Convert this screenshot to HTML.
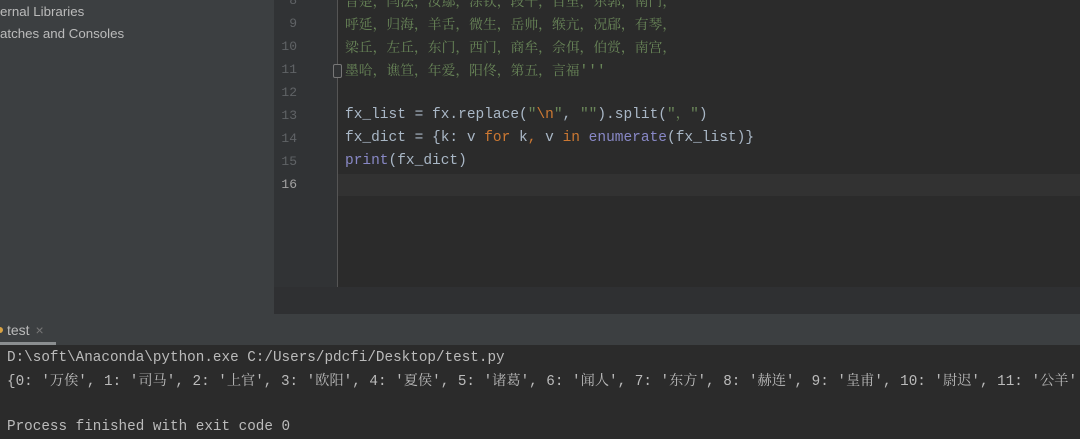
<!DOCTYPE html>
<html><head><meta charset="utf-8"><style>
body{margin:0;width:1080px;height:438px;overflow:hidden;background:#2b2b2b;position:relative;font-family:"Liberation Mono","Noto Serif CJK SC",monospace}
div{position:absolute}
.left{left:0;top:0;width:274px;height:314px;background:#3c3f41}
.lt{left:0;font-family:"Liberation Sans",sans-serif;font-size:13.3px;color:#bbbbbb;white-space:nowrap}
.gut{left:274px;top:0;width:63px;height:287px;background:#313335}
.gl{left:337px;top:0;width:1px;height:287px;background:#555555}
.strip{left:274px;top:287px;width:806px;height:27px;background:#2f3032}
.hdr{left:0;top:314px;width:1080px;height:31px;background:#3c3f41}
.cur{left:338px;top:174px;width:742px;height:22px;background:#323232}
.ln{left:274px;width:23px;text-align:right;color:#606366;font-size:13px;line-height:23px}
.code{left:345px;font-size:14.5px;color:#a9b7c6;white-space:pre;line-height:23px}
.cn{color:#6a8759;font-family:"Noto Serif CJK SC",serif;font-size:13.8px}
.q{font-family:"Liberation Mono",monospace;font-size:14.5px}
.s{color:#6a8759}.k{color:#cc7832}.b{color:#8888c6}
.con{left:7px;font-size:14.3px;color:#bbbbbb;white-space:pre;line-height:23px}
.con span.c{font-family:"Noto Serif CJK SC",serif;font-size:14.2px}
</style></head><body>
<div class="left"></div>
<div class="lt" style="top:4px">ernal Libraries</div>
<div class="lt" style="top:26px">atches and Consoles</div>
<div class="gut"></div>
<div class="gl"></div>
<div class="cur"></div>
<div class="strip"></div>
<div class="ln" style="top:-11px">8</div>
<div class="ln" style="top:12px">9</div>
<div class="ln" style="top:35px">10</div>
<div class="ln" style="top:58px">11</div>
<div class="ln" style="top:81px">12</div>
<div class="ln" style="top:104px">13</div>
<div class="ln" style="top:127px">14</div>
<div class="ln" style="top:150px">15</div>
<div class="ln" style="top:173px;color:#a4a3a3">16</div>
<div style="left:333px;top:64px;width:7px;height:12px;border:1px solid #777;border-radius:2px;background:#313335"></div>
<div class="code cn" style="top:-11px">晋楚，闫法，汝鄢，涂钦，段干，百里，东郭，南门，</div>
<div class="code cn" style="top:12px">呼延，归海，羊舌，微生，岳帅，缑亢，况郈，有琴，</div>
<div class="code cn" style="top:35px">梁丘，左丘，东门，西门，商牟，佘佴，伯赏，南宫，</div>
<div class="code cn" style="top:58px">墨哈，谯笪，年爱，阳佟，第五，言福<span class="q">'''</span></div>
<div class="code" style="top:104px">fx_list = fx.replace(<span class="s">"</span><span class="k">\n</span><span class="s">"</span>, <span class="s">""</span>).split(<span class="s">"，"</span>)</div>
<div class="code" style="top:127px">fx_dict = {k: v <span class="k">for</span> k<span class="k">,</span> v <span class="k">in</span> <span class="b">enumerate</span>(fx_list)}</div>
<div class="code" style="top:150px"><span class="b">print</span>(fx_dict)</div>
<div class="hdr"></div>
<div style="left:-3px;top:327px;width:6px;height:6px;border-radius:3px;background:#d9a343"></div>
<div style="left:7px;top:322px;font-family:'Liberation Sans',sans-serif;font-size:14px;color:#bbbbbb">test <span style="color:#777;margin-left:2px">×</span></div>
<div style="left:0;top:342px;width:56px;height:3px;background:#8b8e90"></div>
<div class="con" style="top:347px">D:\soft\Anaconda\python.exe C:/Users/pdcfi/Desktop/test.py</div>
<div class="con" style="top:369px">{0: '<span class="c">万俟</span>', 1: '<span class="c">司马</span>', 2: '<span class="c">上官</span>', 3: '<span class="c">欧阳</span>', 4: '<span class="c">夏侯</span>', 5: '<span class="c">诸葛</span>', 6: '<span class="c">闻人</span>', 7: '<span class="c">东方</span>', 8: '<span class="c">赫连</span>', 9: '<span class="c">皇甫</span>', 10: '<span class="c">尉迟</span>', 11: '<span class="c">公羊</span>'</div>
<div class="con" style="top:416px">Process finished with exit code 0</div>
</body></html>
